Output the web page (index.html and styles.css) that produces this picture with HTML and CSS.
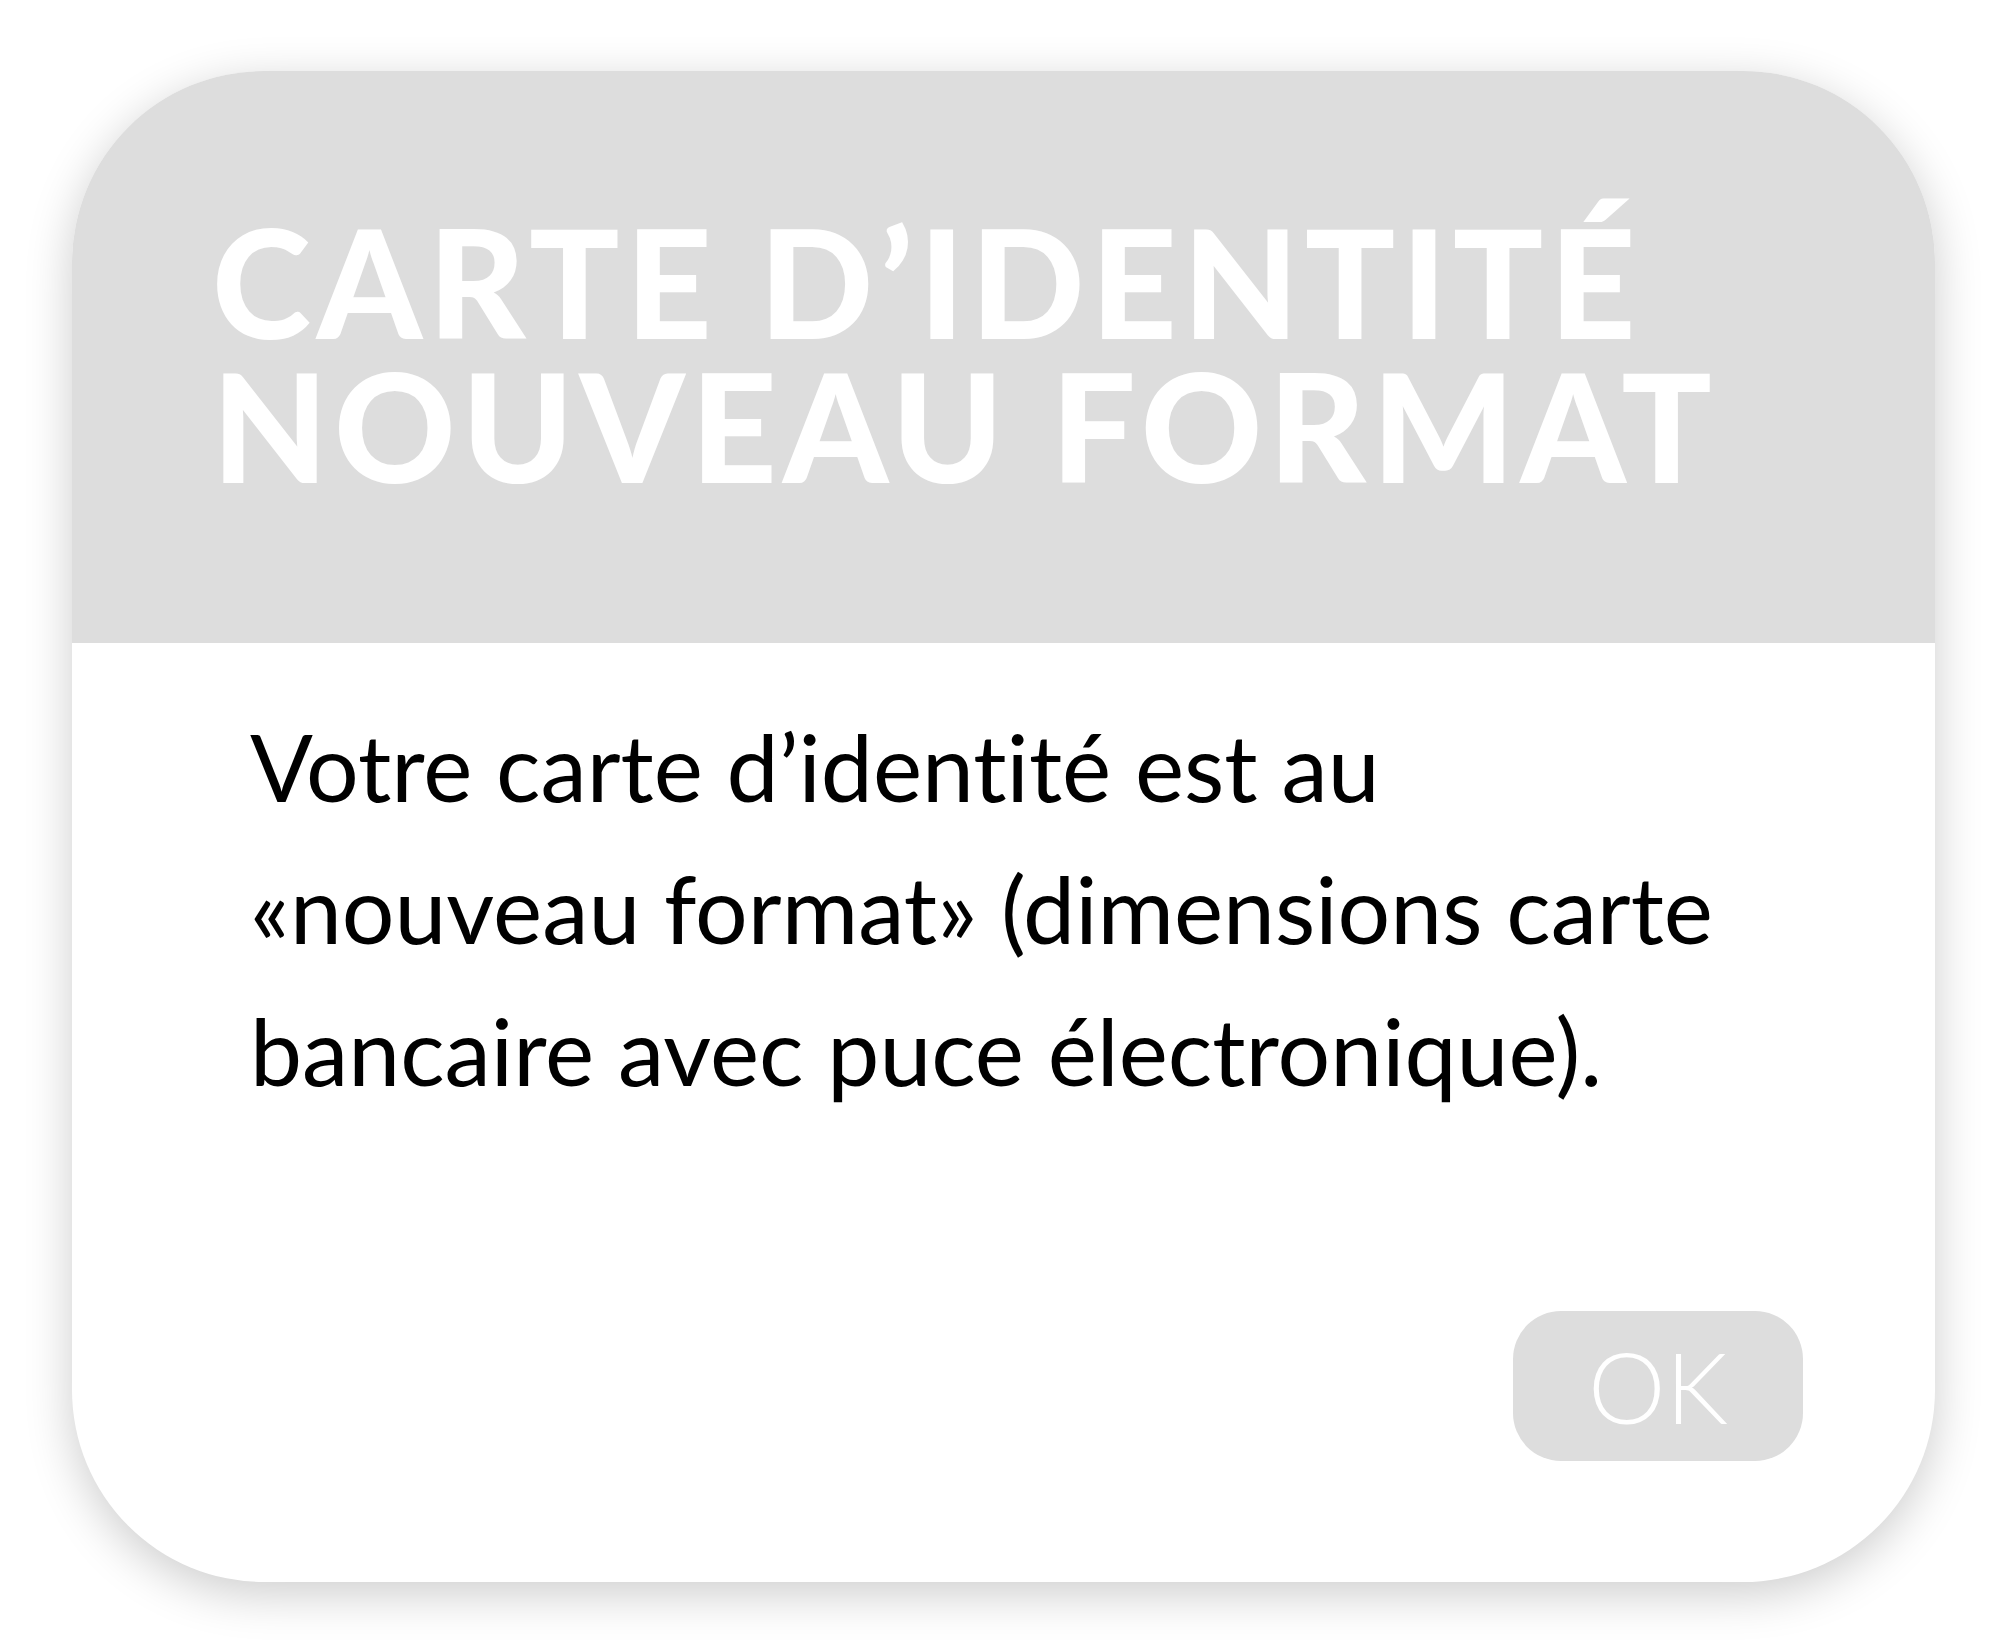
FILE: index.html
```html
<!DOCTYPE html>
<html lang="fr">
<head>
  <meta charset="UTF-8" />
  <title>Carte d'identité nouveau format</title>
  <link rel="stylesheet" href="styles.css">
</head>
<body>

<!-- DIALOG -->
<div class="dialog">
  <div class="dialog-head">
    <h1>Carte d’identité<br/>nouveau format</h1>
  </div>
  <div class="dialog-body">
    <p>Votre carte d’identité est au<br/>«nouveau format» (dimensions carte<br/>bancaire avec puce électronique).</p>
    <div class="actions">
      <button class="ok-btn">OK</button>
    </div>
  </div>
</div>

</body>
</html>
```

FILE: styles.css
```css
* { box-sizing: border-box; }
body, html {
  margin: 0;
  background: #fff;
  font-family: 'Lato', 'Open Sans', sans-serif;
  font-variant-ligatures: none;
}
body { padding: 71px 0 69px 72px; min-height: 100vh; }
.dialog {
  width: 1863px; height: 1511px;
  background: #fff;
  border-radius: 192px;
  box-shadow: 0 12px 48px rgba(0, 0, 0, 0.2);
  overflow: hidden;
  display: flex; flex-direction: column;
}
.dialog-head {
  height: 572px;
  background: #dddddd;
  padding: 138px 0 0 140px;
}
.dialog-head h1 {
  margin: 0;
  color: #fff;
  font-weight: 900;
  font-size: 150px;
  line-height: 144px;
  letter-spacing: 6px;
  text-transform: uppercase;
}
.dialog-body {
  flex: 1;
  padding: 52px 132px 121px 178px;
  display: flex; flex-direction: column;
}
.dialog-body p {
  margin: 0;
  font-size: 93px;
  line-height: 142px;
  color: #000;
}
.actions { margin-top: auto; display: flex; justify-content: flex-end; }
.ok-btn {
  width: 290px; height: 150px;
  border: none; border-radius: 48px;
  background: #dddddd; color: #fff;
  font-family: inherit; font-size: 98px; font-weight: 300;
  padding: 0; cursor: pointer;
}
```
